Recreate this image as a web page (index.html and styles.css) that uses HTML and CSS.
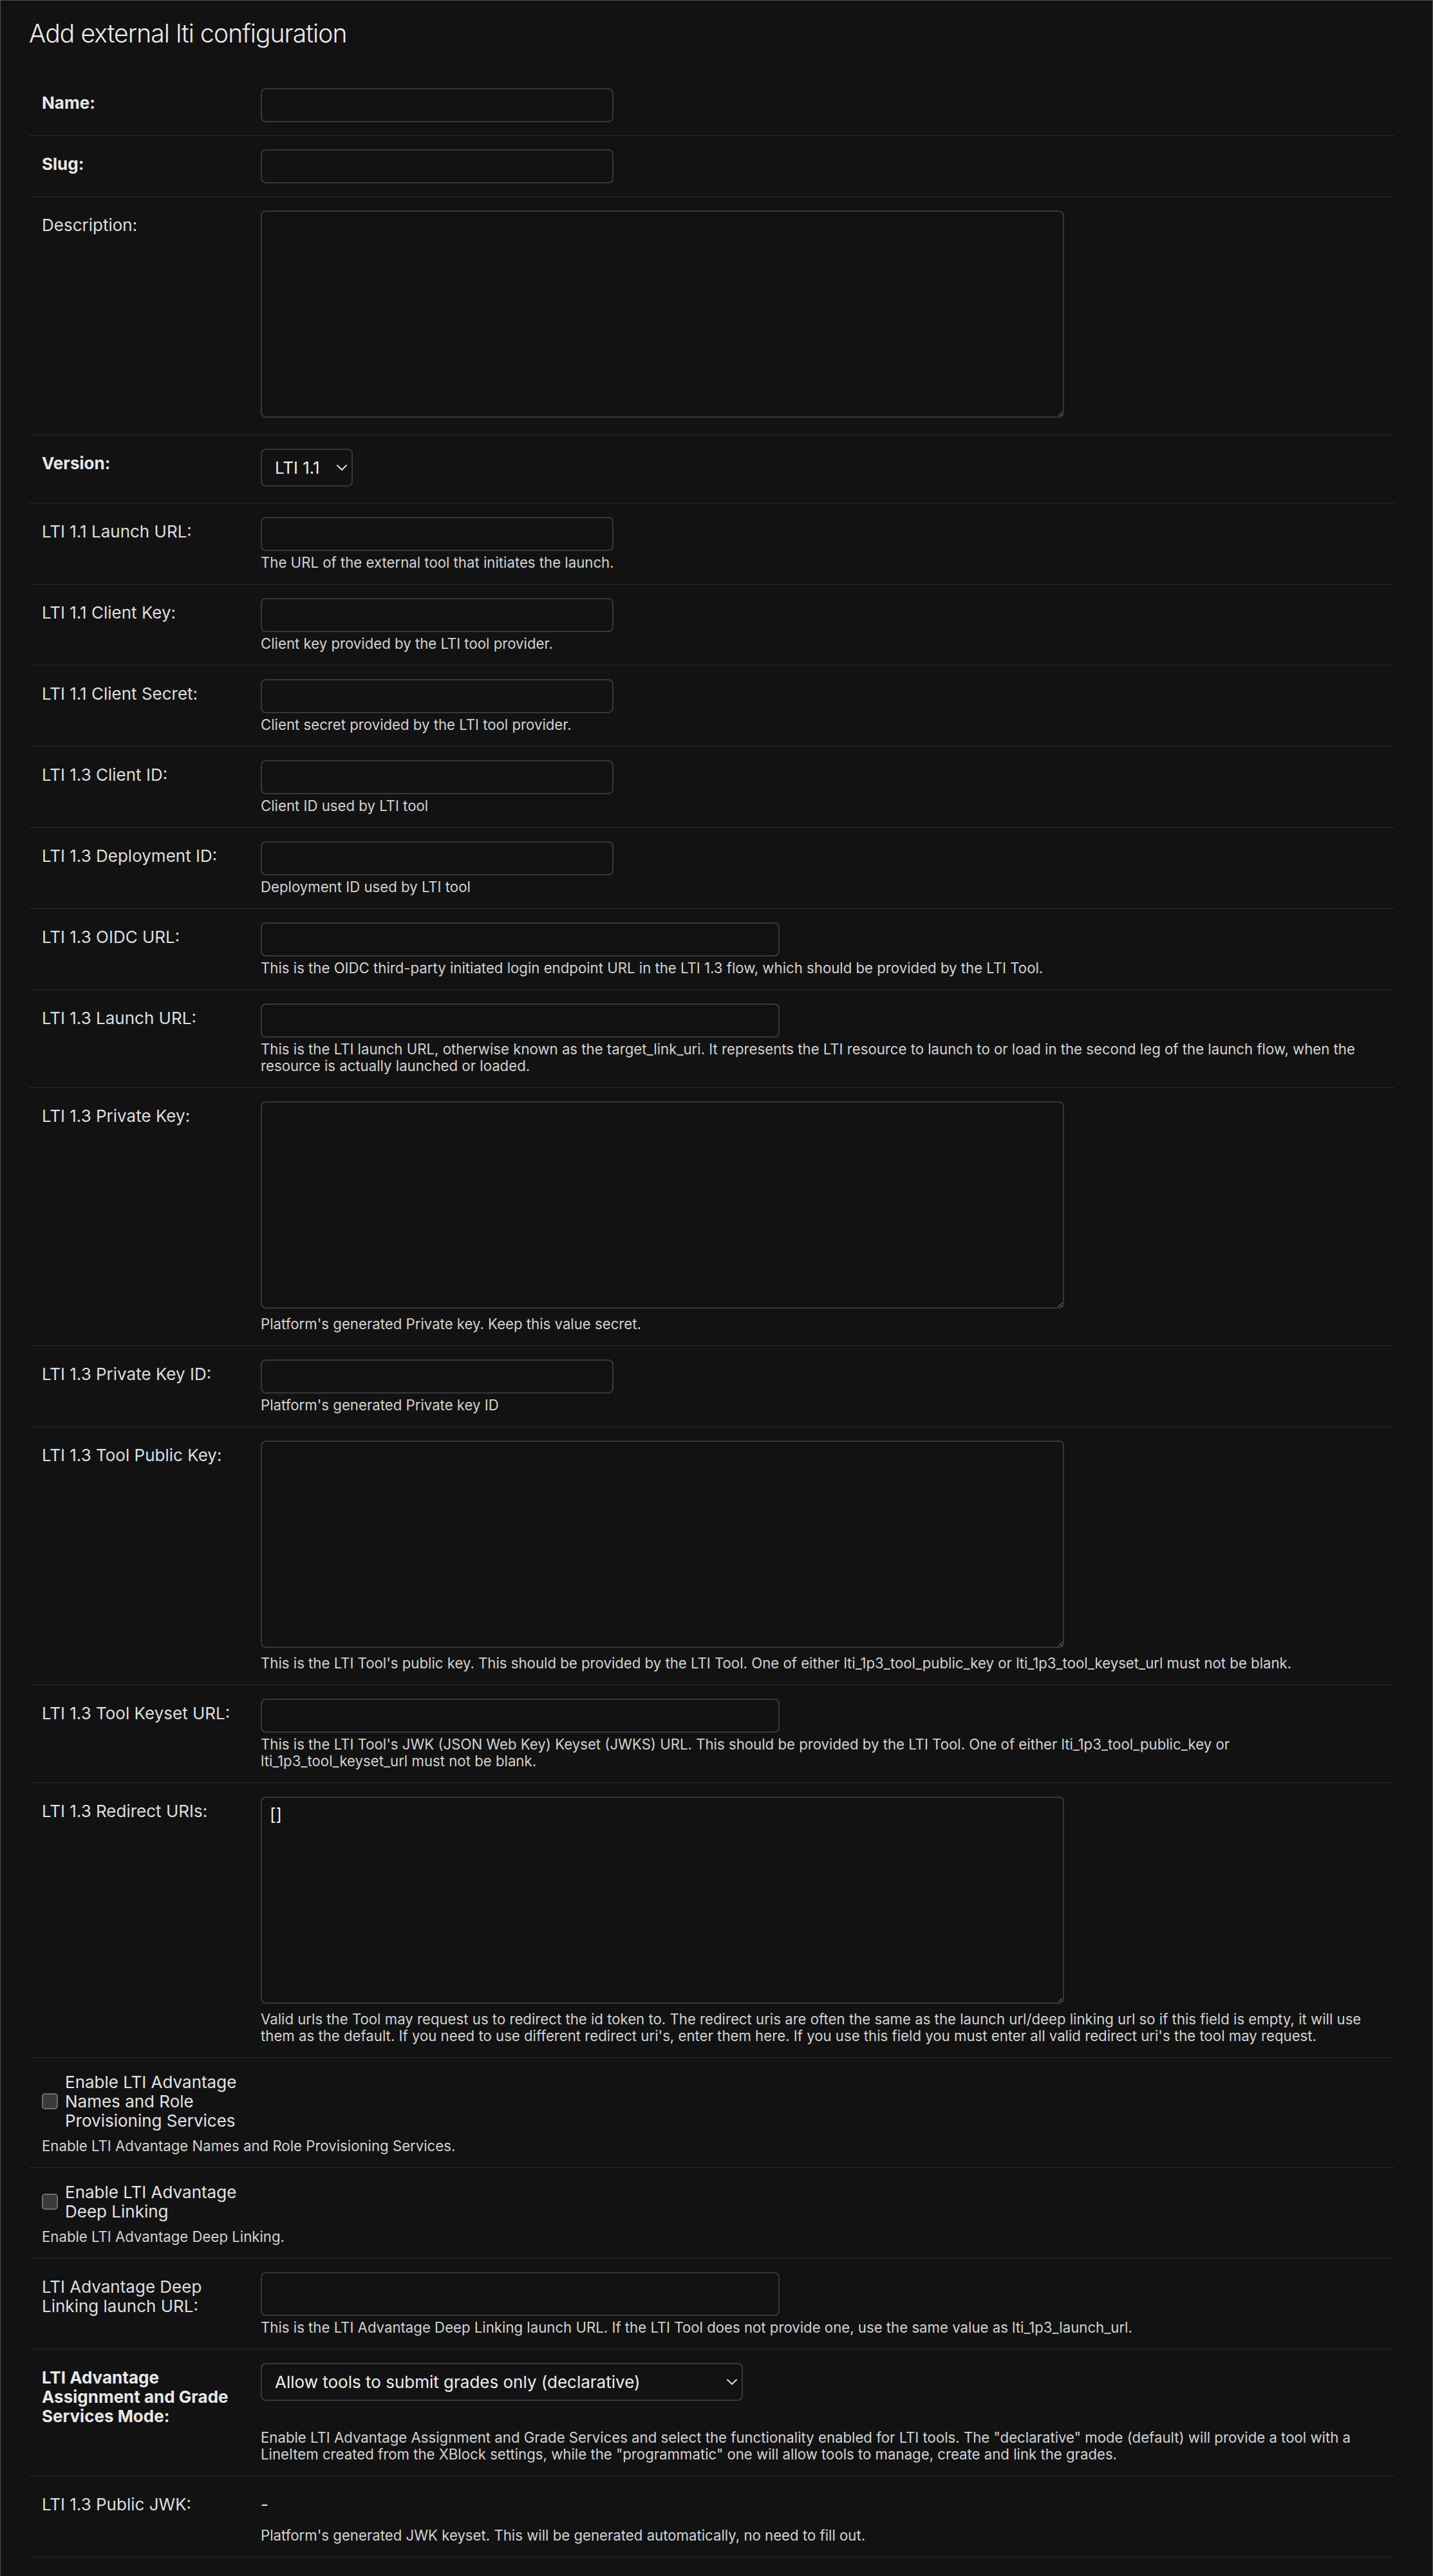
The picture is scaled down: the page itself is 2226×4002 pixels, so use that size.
FILE: index.html
```html
<!DOCTYPE html>
<html lang="en">
<head>
<meta charset="utf-8">
<title>Add external lti configuration</title>
<link rel="stylesheet" href="styles.css">
</head>
<body>
<div class="page">
  <h1 class="title">Add external lti configuration</h1>
  <form class="form">
    <div class="form-row">
      <div class="field"><label class="required" for="id_name">Name:</label><input class="text" type="text" id="id_name"></div>
    </div>
    <div class="form-row">
      <div class="field"><label class="required" for="id_slug">Slug:</label><input class="text" type="text" id="id_slug"></div>
    </div>
    <div class="form-row">
      <div class="field"><label for="id_description">Description:</label><textarea class="area" id="id_description"></textarea></div>
    </div>
    <div class="form-row">
      <div class="field"><label class="required" for="id_version">Version:</label>
        <div class="select-wrap select-version"><select class="select" id="id_version"><option>LTI 1.1</option><option>LTI 1.3</option></select><svg class="chevron" width="16" height="9" viewBox="0 0 16 9"><polyline points="1,1 8,8 15,1" fill="none" stroke="#e6e6e6" stroke-width="1.8" stroke-linecap="round" stroke-linejoin="round"/></svg></div>
      </div>
    </div>
    <div class="form-row">
      <div class="field"><label for="id_lti_1p1_launch_url">LTI 1.1 Launch URL:</label><input class="text" type="text" id="id_lti_1p1_launch_url"></div>
      <div class="help">The URL of the external tool that initiates the launch.</div>
    </div>
    <div class="form-row">
      <div class="field"><label for="id_lti_1p1_client_key">LTI 1.1 Client Key:</label><input class="text" type="text" id="id_lti_1p1_client_key"></div>
      <div class="help">Client key provided by the LTI tool provider.</div>
    </div>
    <div class="form-row">
      <div class="field"><label for="id_lti_1p1_client_secret">LTI 1.1 Client Secret:</label><input class="text" type="text" id="id_lti_1p1_client_secret"></div>
      <div class="help">Client secret provided by the LTI tool provider.</div>
    </div>
    <div class="form-row">
      <div class="field"><label for="id_lti_1p3_client_id">LTI 1.3 Client ID:</label><input class="text" type="text" id="id_lti_1p3_client_id"></div>
      <div class="help">Client ID used by LTI tool</div>
    </div>
    <div class="form-row">
      <div class="field"><label for="id_lti_1p3_deployment_id">LTI 1.3 Deployment ID:</label><input class="text" type="text" id="id_lti_1p3_deployment_id"></div>
      <div class="help">Deployment ID used by LTI tool</div>
    </div>
    <div class="form-row">
      <div class="field"><label for="id_lti_1p3_oidc_url">LTI 1.3 OIDC URL:</label><input class="text url" type="text" id="id_lti_1p3_oidc_url"></div>
      <div class="help">This is the OIDC third-party initiated login endpoint URL in the LTI 1.3 flow, which should be provided by the LTI Tool.</div>
    </div>
    <div class="form-row">
      <div class="field"><label for="id_lti_1p3_launch_url">LTI 1.3 Launch URL:</label><input class="text url" type="text" id="id_lti_1p3_launch_url"></div>
      <div class="help">This is the LTI launch URL, otherwise known as the target_link_uri. It represents the LTI resource to launch to or load in the second leg of the launch flow, when the resource is actually launched or loaded.</div>
    </div>
    <div class="form-row">
      <div class="field"><label for="id_lti_1p3_private_key">LTI 1.3 Private Key:</label><textarea class="area" id="id_lti_1p3_private_key"></textarea></div>
      <div class="help">Platform's generated Private key. Keep this value secret.</div>
    </div>
    <div class="form-row">
      <div class="field"><label for="id_lti_1p3_private_key_id">LTI 1.3 Private Key ID:</label><input class="text" type="text" id="id_lti_1p3_private_key_id"></div>
      <div class="help">Platform's generated Private key ID</div>
    </div>
    <div class="form-row">
      <div class="field"><label for="id_lti_1p3_tool_public_key">LTI 1.3 Tool Public Key:</label><textarea class="area" id="id_lti_1p3_tool_public_key"></textarea></div>
      <div class="help">This is the LTI Tool's public key. This should be provided by the LTI Tool. One of either lti_1p3_tool_public_key or lti_1p3_tool_keyset_url must not be blank.</div>
    </div>
    <div class="form-row">
      <div class="field"><label for="id_lti_1p3_tool_keyset_url">LTI 1.3 Tool Keyset URL:</label><input class="text url" type="text" id="id_lti_1p3_tool_keyset_url"></div>
      <div class="help">This is the LTI Tool's JWK (JSON Web Key) Keyset (JWKS) URL. This should be provided by the LTI Tool. One of either lti_1p3_tool_public_key or<br>lti_1p3_tool_keyset_url must not be blank.</div>
    </div>
    <div class="form-row">
      <div class="field"><label for="id_lti_1p3_redirect_uris">LTI 1.3 Redirect URIs:</label><textarea class="area" id="id_lti_1p3_redirect_uris">[]</textarea></div>
      <div class="help">Valid urls the Tool may request us to redirect the id token to. The redirect uris are often the same as the launch url/deep linking url so if this field is empty, it will use them as the default. If you need to use different redirect uri's, enter them here. If you use this field you must enter all valid redirect uri's the tool may request.</div>
    </div>
    <div class="form-row">
      <div class="check-field"><input class="checkbox" type="checkbox" id="id_lti_advantage_enable_nrps"><label class="check-label" for="id_lti_advantage_enable_nrps">Enable LTI Advantage Names and Role Provisioning Services</label></div>
      <div class="help help-check">Enable LTI Advantage Names and Role Provisioning Services.</div>
    </div>
    <div class="form-row">
      <div class="check-field"><input class="checkbox" type="checkbox" id="id_lti_advantage_deep_linking_enabled"><label class="check-label" for="id_lti_advantage_deep_linking_enabled">Enable LTI Advantage Deep Linking</label></div>
      <div class="help help-check">Enable LTI Advantage Deep Linking.</div>
    </div>
    <div class="form-row">
      <div class="field"><label for="id_lti_advantage_deep_linking_launch_url">LTI Advantage Deep Linking launch URL:</label><input class="text url" type="text" id="id_lti_advantage_deep_linking_launch_url"></div>
      <div class="help">This is the LTI Advantage Deep Linking launch URL. If the LTI Tool does not provide one, use the same value as lti_1p3_launch_url.</div>
    </div>
    <div class="form-row">
      <div class="field"><label class="required" for="id_lti_advantage_ags_mode">LTI Advantage Assignment and Grade Services Mode:</label>
        <div class="select-wrap select-ags"><select class="select" id="id_lti_advantage_ags_mode"><option>Allow tools to submit grades only (declarative)</option><option>Disabled</option></select><svg class="chevron" width="16" height="9" viewBox="0 0 16 9"><polyline points="1,1 8,8 15,1" fill="none" stroke="#e6e6e6" stroke-width="1.8" stroke-linecap="round" stroke-linejoin="round"/></svg></div>
      </div>
      <div class="help">Enable LTI Advantage Assignment and Grade Services and select the functionality enabled for LTI tools. The "declarative" mode (default) will provide a tool with a LineItem created from the XBlock settings, while the "programmatic" one will allow tools to manage, create and link the grades.</div>
    </div>
    <div class="form-row">
      <div class="field"><label>LTI 1.3 Public JWK:</label><div class="readonly">-</div></div>
      <div class="help help-flush">Platform's generated JWK keyset. This will be generated automatically, no need to fill out.</div>
    </div>
  </form>
</div>
</body>
</html>
```
FILE: styles.css
```css
html, body {
  margin: 0;
  padding: 0;
  background: #121212;
  color-scheme: dark;
}

body {
  font-family: Inter, "Noto Sans", "Liberation Sans", sans-serif;
  color: #e6e6e6;
}

.page {
  box-sizing: border-box;
  min-height: 4002px;
  border: 1px solid #505050;
  border-bottom: none;
  padding: 27px 58px 0 44px;
}

.title {
  margin: 0 0 40px;
  font-size: 39px;
  line-height: 48px;
  font-weight: 300;
  letter-spacing: -0.9px;
  color: #ececec;
}

.form {
  margin: 0;
}

.form-row {
  padding: 21px 20px 20px;
  border-bottom: 1px solid #282828;
}

.field {
  display: flex;
  align-items: stretch;
}

.field label {
  flex: 0 0 320px;
  width: 320px;
  padding: 8px 20px 0 0;
  font-size: 26px;
  line-height: 30px;
  color: #dedede;
}

.field label.required {
  font-weight: 700;
  color: #e8e8e8;
}

.text {
  box-sizing: border-box;
  width: 548px;
  margin: 0;
  padding: 10px 12px;
  font-family: inherit;
  font-size: 26px;
  line-height: 29px;
  color: #eeeeee;
  background: #121212;
  border: 2px solid #383838;
  border-radius: 8px;
  outline: none;
}

.text.url {
  width: 806px;
}

.area {
  box-sizing: border-box;
  width: 1248px;
  height: 322px;
  margin: 0 0 6px;
  padding: 10px 12px;
  font-family: inherit;
  font-size: 26px;
  line-height: 31px;
  color: #eeeeee;
  background: #121212;
  border: 2px solid #383838;
  border-radius: 8px;
  outline: none;
  resize: both;
}

.select-wrap {
  position: relative;
  align-self: flex-start;
  margin-bottom: 5px;
}

.select {
  display: block;
  box-sizing: border-box;
  height: 59px;
  margin: 0;
  padding: 0 40px 0 20px;
  -webkit-appearance: none;
  appearance: none;
  font-family: inherit;
  font-size: 26px;
  color: #eeeeee;
  background: #121212;
  border: 2px solid #383838;
  border-radius: 8px;
  outline: none;
}

.select-version .select {
  width: 143px;
}

.select-ags .select {
  width: 749px;
}

.chevron {
  position: absolute;
  right: 9px;
  top: 25px;
  pointer-events: none;
}

.help {
  margin: 5px 0 0 340px;
  font-size: 22.2px;
  line-height: 26px;
  color: #d2d2d2;
}

.help-check {
  margin: 11px 0 0 0;
}

.help-flush {
  margin-top: 0;
}

.check-field {
  display: flex;
  align-items: center;
}

.checkbox {
  -webkit-appearance: none;
  appearance: none;
  box-sizing: border-box;
  flex: 0 0 25px;
  width: 25px;
  height: 25px;
  margin: 0;
  background: #3a3a3a;
  border: 2px solid #6e6e6e;
  border-radius: 5px;
}

.check-label {
  width: 300px;
  padding: 2px 0 0 11px;
  font-size: 26px;
  line-height: 30px;
  color: #e2e2e2;
}

.readonly {
  padding: 8px 0 20px;
  font-size: 26px;
  line-height: 30px;
  color: #eeeeee;
}
```
